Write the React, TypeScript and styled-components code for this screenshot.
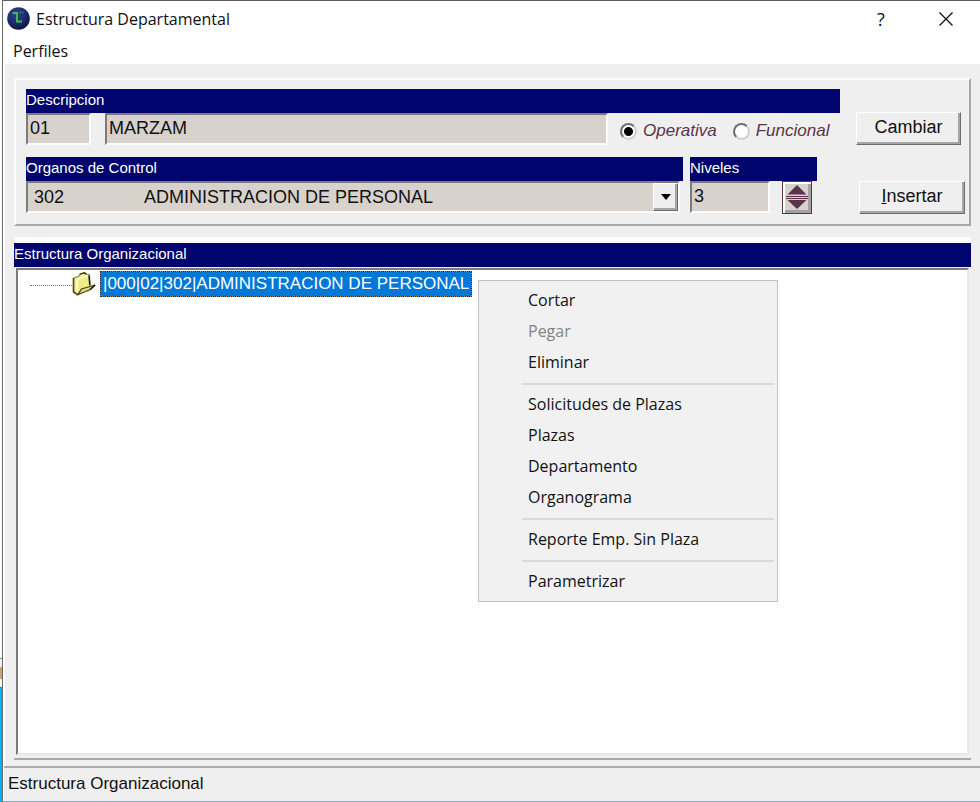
import React, { useState } from 'react';
import styled, { createGlobalStyle, css } from 'styled-components';

const navy = '#00056d';
const face = '#efefef';
const fieldFace = '#d8d2cc';
const plum = '#5a3448';
const arial = '"Liberation Sans", Arial, sans-serif';
const segoe = '"Open Sans", "Noto Sans", sans-serif';

const GlobalStyle = createGlobalStyle`
  *, *::before, *::after { box-sizing: border-box; }
  body { margin: 0; background: #fff; color: #111; font: 18px/22px ${arial}; }
  button, input, select { font: inherit; color: inherit; margin: 0; border-radius: 0; }
`;

const sunken = css`
  border: 2px solid;
  border-color: #7b7b7b #fbfbfb #fbfbfb #7b7b7b;
`;

const raised = css`
  border: 1px solid;
  border-color: #fff #6c6c6c #6c6c6c #fff;
  box-shadow: inset -2px -2px 0 #a6a6a6;
`;

const Screen = styled.div`
  display: flex;
  min-height: 100vh;
`;

const DesktopEdge = styled.div`
  flex: 0 0 3px;
  display: flex;
  flex-direction: column;
  border-right: 1px solid #6b6b6b;
  background: #fdfdfd;
`;

const EdgeSpace = styled.div`
  flex: 1;
`;

const EdgeStatus = styled.div`
  height: 30px;
  border-top: 1px solid #8a8a8a;
  border-bottom: 1px solid #6d6d6d;
  background: linear-gradient(#f4f4f4 8px, #c2aa62 8px, #c2aa62 20px, #f4f4f4 20px);
`;

const EdgeTaskbar = styled.div`
  height: 114px;
  background: #0bb0f2;
`;

const Window = styled.main`
  flex: 1;
  min-width: 0;
  display: flex;
  flex-direction: column;
  border-top: 1px solid #5f5f5f;
  border-bottom: 1px solid #7db0d8;
`;

const TitleBar = styled.header`
  display: flex;
  align-items: center;
  height: 37px;
  padding: 0 16px 2px 4px;
  gap: 6px;
  font-family: ${segoe};
`;

const Title = styled.h1`
  flex: 1;
  margin: 0;
  font-size: 16px;
  line-height: 22px;
  font-weight: 400;
`;

const CaptionButton = styled.button`
  display: grid;
  place-items: center;
  width: 36px;
  height: 30px;
  margin-left: 23px;
  padding: 0;
  border: 0;
  background: none;
`;

const MenuBar = styled.nav`
  height: 26px;
  padding: 0 8px;
  font-family: ${segoe};
  font-size: 16px;
`;

const MenuBarItem = styled.button`
  padding: 0 2px;
  border: 0;
  background: none;
  line-height: 26px;
`;

const Client = styled.div`
  flex: 1;
  display: flex;
  flex-direction: column;
  gap: 11px;
  margin-left: 2px;
  padding: 14px 9px 6px 9px;
  background: ${face};
`;

const Group = styled.section`
  border: 2px solid;
  border-color: #fbfbfb #a9a9a9 #a9a9a9 #fbfbfb;
`;

const FieldGroup = styled(Group)`
  display: flex;
  flex-direction: column;
  gap: 12px;
  padding: 9px 4px 10px 10px;
`;

const TreeGroup = styled(Group)`
  flex: 1;
  display: flex;
  flex-direction: column;
  border-width: 6px 0 2px;
`;

const Row = styled.div<{ $end?: number }>`
  display: flex;
  align-items: flex-end;
  padding-right: ${(p) => p.$end ?? 0}px;
`;

const Block = styled.div<{ $width?: number; $gap: number }>`
  flex: ${(p) => (p.$width ? `0 0 ${p.$width}px` : '1 1 0')};
  min-width: 0;
  margin-right: ${(p) => p.$gap}px;
`;

const captionBar = css`
  display: block;
  height: 24px;
  background: ${navy};
  color: #fff;
  font-size: 15px;
  line-height: 21px;
`;

const Caption = styled.label`
  ${captionBar}
`;

const TreeCaption = styled.h2`
  ${captionBar}
  margin: 0;
  font-weight: 400;
`;

const Fields = styled.div`
  display: flex;
  align-items: flex-start;
`;

const TextField = styled.input<{ $width?: number; $gap: number }>`
  ${sunken}
  flex: ${(p) => (p.$width ? `0 0 ${p.$width}px` : '1 1 0')};
  min-width: 0;
  height: 32px;
  margin-right: ${(p) => p.$gap}px;
  padding: 0 2px 2px;
  background: ${fieldFace};
`;

const RadioSet = styled.div`
  flex: 0 0 220px;
  display: flex;
  gap: 16px;
  padding-top: 7px;
  font-size: 17px;
`;

const RadioLabel = styled.label`
  display: flex;
  align-items: center;
  gap: 6px;
  color: ${plum};
  font-style: italic;
`;

const Radio = styled.input`
  appearance: none;
  width: 17px;
  height: 17px;
  border: 2px solid;
  border-color: #6f6f6f #d0d0d0 #d0d0d0 #6f6f6f;
  border-radius: 50%;
  background: #fff;

  &:checked {
    background: radial-gradient(circle, #000 4px, #fff 5px);
  }
`;

const PushButton = styled.button<{ $width: number }>`
  ${raised}
  flex: 0 0 ${(p) => p.$width}px;
  height: 33px;
  padding: 0 0 3px;
  background: ${face};
`;

const Combo = styled.div`
  ${sunken}
  display: grid;
  grid-template-columns: 1fr 25px;
  height: 32px;
  margin: 0 3px 1px 0;
  background: ${fieldFace};
`;

const ComboSelect = styled.select`
  grid-area: 1 / 1 / 2 / 3;
  appearance: none;
  border: 0;
  padding: 0 26px 0 6px;
  background: none;
`;

const ComboArrow = styled.span`
  ${raised}
  grid-area: 1 / 2;
  display: grid;
  place-items: center;
  background: ${face};
  pointer-events: none;
`;

const Spinner = styled.div`
  display: flex;
  flex-direction: column;
  width: 30px;
  height: 33px;
  padding: 3px 0 4px;
  border: 1px solid ${plum};
  background: ${fieldFace};
  box-shadow: inset 2px 2px 0 #fff, inset -3px -3px 0 #a5a1a1;
`;

const SpinButton = styled.button`
  flex: 1;
  display: grid;
  place-items: center;
  padding: 0;
  border: 0;
  background: none;
`;

const TreePanel = styled.div`
  ${sunken}
  position: relative;
  flex: 1;
  margin: 1px 2px 3px;
  background: #fff;
  border-right-color: #e8e8e8;
  border-bottom-color: #e8e8e8;
`;

const Tree = styled.ul`
  margin: 0;
  padding: 0 0 0 12px;
  list-style: none;
`;

const TreeRow = styled.li`
  display: flex;
  align-items: center;
  height: 27px;
`;

const TreeLine = styled.span`
  width: 42px;
  margin-top: 4px;
  border-top: 1px dotted #777;
`;

const TreeNode = styled.button`
  height: 26px;
  margin-left: 4px;
  padding: 0 2px;
  border: 1px dashed #e08a3a;
  outline: 1px dotted #1b2b45;
  outline-offset: -1px;
  background: #0078d7;
  color: #fff;
  font-size: 17px;
  line-height: 22px;
`;

const ContextMenu = styled.menu`
  position: absolute;
  top: 10px;
  left: 460px;
  width: 300px;
  margin: 0;
  padding: 4px 3px 4px 43px;
  border: 1px solid #c0c0c0;
  background: #f1f1f1;
  list-style: none;
  font-family: ${segoe};
  font-size: 16px;
`;

const MenuRow = styled.li`
  height: 31px;
`;

const MenuButton = styled.button`
  width: 100%;
  height: 31px;
  padding: 0 0 2px 6px;
  border: 0;
  background: none;
  text-align: left;

  &:disabled {
    color: #838383;
  }
`;

const Separator = styled.li`
  height: 11px;
  padding-top: 5px;

  &::before {
    content: '';
    display: block;
    height: 2px;
    background: #dadada;
  }
`;

const StatusBar = styled.footer`
  height: 35px;
  margin-left: 1px;
  padding: 5px 4px;
  border-top: 2px solid #adadad;
  background: ${face};
  font-size: 17px;
`;

function AppLogo() {
  return (
    <svg width="23" height="23" viewBox="0 0 23 23" aria-hidden="true">
      <defs>
        <radialGradient id="orb" cx="0.4" cy="0.3" r="0.75">
          <stop offset="0" stopColor="#2d4190" />
          <stop offset="0.6" stopColor="#1b2a68" />
          <stop offset="1" stopColor="#0a1030" />
        </radialGradient>
      </defs>
      <circle cx="11.5" cy="11.5" r="11.3" fill="url(#orb)" />
      <path d="M5.500 6h4.500v8.500h5" fill="none" stroke="#45b649" strokeWidth="2" />
      <path d="M12.500 5.500h1.500M15.500 5.500h1" stroke="#3f9a58" strokeWidth="1.300" />
    </svg>
  );
}

function FolderIcon() {
  return (
    <svg width="24" height="24" viewBox="0 0 24 24" aria-hidden="true">
      <path d="M1.5 6 6.500 4.500 8 2l4.500-1.500 2 1.500 2.500 .5 1 12L6 22.500 1.500 20Z" fill="#f1ec87" stroke="#8b8740" strokeWidth="1.2" />
      <path d="M5 7 15.500 4M5 7v14" fill="none" stroke="#fffde0" strokeWidth="1.4" />
      <path d="M1.500 6v14L6 22.800" fill="none" stroke="#4c4920" strokeWidth="1.5" />
      <path d="M6 22.500 9.500 17l13.500-4-4.500 4.500Z" fill="#e6e07a" stroke="#45431f" strokeWidth="1.3" />
      <path d="M17.200 3.500 17.800 13M18 17.500l5-4.500" fill="none" stroke="#1d1c10" strokeWidth="1.6" />
      <path d="M8 2.200 12.300 .8l2 1.400" fill="none" stroke="#222110" strokeWidth="1.2" />
    </svg>
  );
}

type Entry = { label: string; disabled?: boolean };

const menuSections: Entry[][] = [
  [{ label: 'Cortar' }, { label: 'Pegar', disabled: true }, { label: 'Eliminar' }],
  [{ label: 'Solicitudes de Plazas' }, { label: 'Plazas' }, { label: 'Departamento' }, { label: 'Organograma' }],
  [{ label: 'Reporte Emp. Sin Plaza' }],
  [{ label: 'Parametrizar' }],
];

export default function App() {
  const [kind, setKind] = useState('Operativa');
  const [levels, setLevels] = useState(3);

  return (
    <Screen>
      <GlobalStyle />
      <DesktopEdge>
        <EdgeSpace />
        <EdgeStatus />
        <EdgeTaskbar />
      </DesktopEdge>
      <Window>
        <TitleBar>
          <AppLogo />
          <Title>Estructura Departamental</Title>
          <CaptionButton>?</CaptionButton>
          <CaptionButton aria-label="Cerrar">
            <svg width="16" height="16" viewBox="0 0 16 16" aria-hidden="true">
              <path d="M1.5 1.5l13 13M14.5 1.5l-13 13" stroke="#111" strokeWidth="1.3" />
            </svg>
          </CaptionButton>
        </TitleBar>
        <MenuBar>
          <MenuBarItem>Perfiles</MenuBarItem>
        </MenuBar>
        <Client>
          <FieldGroup>
            <Row $end={4}>
              <Block $gap={16}>
                <Caption htmlFor="descripcion">Descripcion</Caption>
                <Fields>
                  <TextField $width={65} $gap={14} aria-label="Clave" defaultValue="01" />
                  <TextField $gap={12} id="descripcion" defaultValue="MARZAM" />
                  <RadioSet>
                    {['Operativa', 'Funcional'].map((name) => (
                      <RadioLabel key={name}>
                        <Radio type="radio" name="kind" checked={kind === name} onChange={() => setKind(name)} />
                        {name}
                      </RadioLabel>
                    ))}
                  </RadioSet>
                </Fields>
              </Block>
              <PushButton $width={105}>Cambiar</PushButton>
            </Row>
            <Row>
              <Block $gap={7}>
                <Caption htmlFor="organos">Organos de Control</Caption>
                <Combo>
                  <ComboSelect id="organos">
                    <option>{'302' + '\u00a0'.repeat(16) + 'ADMINISTRACION DE PERSONAL'}</option>
                  </ComboSelect>
                  <ComboArrow>
                    <svg width="10" height="6" viewBox="0 0 10 6" aria-hidden="true">
                      <path d="M0 0h10L5 6z" fill="#000" />
                    </svg>
                  </ComboArrow>
                </Combo>
              </Block>
              <Block $width={127} $gap={42}>
                <Caption htmlFor="niveles">Niveles</Caption>
                <Fields>
                  <TextField
                    $width={80}
                    $gap={12}
                    id="niveles"
                    value={levels}
                    onChange={(e) => setLevels(Number(e.target.value) || 0)}
                  />
                  <Spinner>
                    <SpinButton aria-label="Aumentar" onClick={() => setLevels(levels + 1)}>
                      <svg width="22" height="12" viewBox="0 0 22 12" aria-hidden="true">
                        <path d="M11 0 20.500 9.500H1.500z" fill={plum} />
                        <path d="M0 11.500h22" stroke={plum} />
                      </svg>
                    </SpinButton>
                    <SpinButton aria-label="Disminuir" onClick={() => setLevels(levels - 1)}>
                      <svg width="22" height="12" viewBox="0 0 22 12" aria-hidden="true">
                        <path d="M0 1.500h22" stroke={plum} />
                        <path d="M11 12 20.500 3H1.500z" fill={plum} />
                      </svg>
                    </SpinButton>
                  </Spinner>
                </Fields>
              </Block>
              <PushButton $width={106}>
                <u>I</u>nsertar
              </PushButton>
            </Row>
          </FieldGroup>
          <TreeGroup>
            <TreeCaption>Estructura Organizacional</TreeCaption>
            <TreePanel>
              <Tree>
                <TreeRow>
                  <TreeLine />
                  <FolderIcon />
                  <TreeNode>|000|02|302|ADMINISTRACION DE PERSONAL</TreeNode>
                </TreeRow>
              </Tree>
              <ContextMenu>
                {menuSections.map((section, i) => (
                  <React.Fragment key={section[0].label}>
                    {i > 0 && <Separator role="separator" />}
                    {section.map((entry) => (
                      <MenuRow key={entry.label}>
                        <MenuButton disabled={entry.disabled}>{entry.label}</MenuButton>
                      </MenuRow>
                    ))}
                  </React.Fragment>
                ))}
              </ContextMenu>
            </TreePanel>
          </TreeGroup>
        </Client>
        <StatusBar>Estructura Organizacional</StatusBar>
      </Window>
    </Screen>
  );
}
